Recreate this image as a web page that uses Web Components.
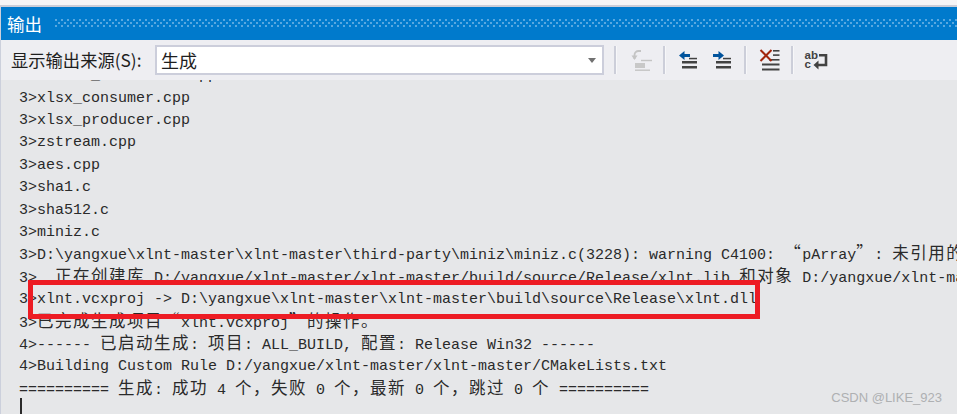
<!DOCTYPE html>
<html lang="zh-CN">
<head>
<meta charset="utf-8">
<title>输出</title>
<style>
html,body{margin:0;padding:0;height:414px;overflow:hidden;background:#e6e7e9}
</style>
</head>
<body>
<output-window>
  <title-bar slot="title">输出</title-bar>
  <output-toolbar slot="toolbar">
    <span slot="label">显示输出来源(S):</span>
    <source-combo slot="combo">生成</source-combo>
  </output-toolbar>
  <output-pane slot="pane">
    <output-line text="3>number_formatter.cpp"></output-line>
    <output-line text="3>xlsx_consumer.cpp"></output-line>
    <output-line text="3>xlsx_producer.cpp"></output-line>
    <output-line text="3>zstream.cpp"></output-line>
    <output-line text="3>aes.cpp"></output-line>
    <output-line text="3>sha1.c"></output-line>
    <output-line text="3>sha512.c"></output-line>
    <output-line text="3>miniz.c"></output-line>
    <output-line text="3>D:\yangxue\xlnt-master\xlnt-master\third-party\miniz\miniz.c(3228): warning C4100: “pArray”: 未引用的形参"></output-line>
    <output-line text="3>  正在创建库 D:/yangxue/xlnt-master/xlnt-master/build/source/Release/xlnt.lib 和对象 D:/yangxue/xlnt-master/xlnt-master/build/source/Release/xlnt.exp"></output-line>
    <output-line text="3>xlnt.vcxproj -> D:\yangxue\xlnt-master\xlnt-master\build\source\Release\xlnt.dll"></output-line>
    <output-line text="3>已完成生成项目“xlnt.vcxproj”的操作。"></output-line>
    <output-line text="4>------ 已启动生成: 项目: ALL_BUILD, 配置: Release Win32 ------"></output-line>
    <output-line text="4>Building Custom Rule D:/yangxue/xlnt-master/xlnt-master/CMakeLists.txt"></output-line>
    <output-line text="========== 生成: 成功 4 个，失败 0 个，最新 0 个，跳过 0 个 =========="></output-line>
    <text-caret></text-caret>
    <red-highlight slot="over"></red-highlight>
    <water-mark slot="over">CSDN @LIKE_923</water-mark>
  </output-pane>
</output-window>
<script>
function def(name, html, init){
  customElements.define(name, class extends HTMLElement{
    connectedCallback(){
      if(this.shadowRoot) return;
      const r=this.attachShadow({mode:'open'});
      r.innerHTML=html;
      if(init) init.call(this,r);
    }
  });
}
def('output-window',`<style>
:host{display:flex;flex-direction:column;width:957px;height:414px;overflow:hidden;background:#f5f5f6}
.top{height:5px;flex:none}
.line{height:2px;flex:none;background:#ccced8}
.body{flex:1;min-height:0;display:flex;flex-direction:column;border-left:1px solid #ccd0dc}
::slotted([slot=pane]){flex:1;min-height:0}
</style><div class="top"></div><div class="line"></div><div class="body"><slot name="title"></slot><slot name="toolbar"></slot><slot name="pane"></slot></div>`);

def('title-bar',`<style>
:host{display:flex;align-items:center;flex:none;height:33px;background:#007acc;color:#fff;padding-left:6px;font:17.5px/33px "Noto Sans CJK SC","Liberation Sans",sans-serif}
svg{display:block;flex:1;min-width:0;height:9px;margin-left:13px}
</style><slot></slot><svg aria-hidden="true"><defs><pattern id="g" width="6" height="6" patternUnits="userSpaceOnUse"><rect x="0" y="0" width="2" height="2" fill="#59a8e0"/><rect x="3" y="3" width="2" height="2" fill="#59a8e0"/></pattern></defs><rect width="100%" height="100%" fill="url(#g)"/></svg>`);

const ink='#424242', blue='#00539c';
def('output-toolbar',`<style>
:host{display:flex;align-items:center;flex:none;height:40px;background:#eeeef2;color:#1e1e1e;padding-left:10px;font:17.3px/24px "Noto Sans CJK SC","Liberation Sans",sans-serif;white-space:nowrap}
::slotted([slot=label]){width:144px;flex:none}
::slotted([slot=combo]){flex:none}
.sep{flex:none;height:28px;background:#ccced9;border-right:1px solid #f7f7f9;box-sizing:border-box;width:3px}
svg{flex:none;display:block;width:24px;height:24px;overflow:visible}
</style>
<slot name="label"></slot><slot name="combo"></slot>
<div class="sep" style="margin-left:10px"></div>
<svg style="margin:0 9px 0 13px" viewBox="0 0 24 24" aria-hidden="true">
  <path d="M11 3H8.500A4 4 0 0 0 4.500 7V11" fill="none" stroke="#c4c4c4" stroke-width="1.800"/>
  <path d="M1.500 7.500L4.500 12L7.500 7.500Z" fill="#c4c4c4"/>
  <rect x="11" y="11.800" width="11" height="1.400" fill="#c4c4c4"/>
  <rect x="5" y="15" width="10" height="5" fill="#c8c8c8"/>
  <rect x="5" y="21.500" width="15" height="1.400" fill="#c4c4c4"/>
</svg>
<div class="sep"></div>
<svg style="margin:0 0 0 10px" viewBox="0 0 24 24" aria-hidden="true">
  <path d="M3 7.500L8.500 3V6H14V9H8.500V12Z" fill="${blue}"/>
  <rect x="13" y="9.800" width="8" height="1.500" fill="${ink}"/>
  <rect x="6" y="13" width="15" height="2.500" fill="${ink}"/>
  <rect x="6" y="18" width="15" height="2.500" fill="${ink}"/>
</svg>
<svg style="margin:0 10px 0 10px" viewBox="0 0 24 24" aria-hidden="true">
  <path d="M14 7.500L8.500 3V6H3V9H8.500V12Z" fill="${blue}"/>
  <rect x="13" y="9.800" width="8" height="1.500" fill="${ink}"/>
  <rect x="6" y="13" width="15" height="2.500" fill="${ink}"/>
  <rect x="6" y="18" width="15" height="2.500" fill="${ink}"/>
</svg>
<div class="sep"></div>
<svg style="margin:0 9px 0 11px" viewBox="0 0 24 24" aria-hidden="true">
  <rect x="15" y="2" width="6.500" height="1.600" fill="${ink}"/>
  <rect x="15" y="6.300" width="6.500" height="1.600" fill="${ink}"/>
  <rect x="11" y="11" width="10.500" height="1.600" fill="${ink}"/>
  <rect x="4" y="15.500" width="17.500" height="2" fill="${ink}"/>
  <rect x="4" y="20.500" width="17.500" height="2" fill="${ink}"/>
  <path d="M2.500 2L13.500 13M13.500 2L2.500 13" stroke="#a1260d" stroke-width="2" fill="none"/>
</svg>
<div class="sep"></div>
<svg style="margin-left:10px" viewBox="0 0 24 24" aria-hidden="true">
  <text x="0.500" y="11" font-family="Liberation Sans" font-weight="700" font-size="11.500" fill="${ink}">ab</text>
  <text x="0.500" y="19.500" font-family="Liberation Sans" font-weight="700" font-size="11.500" fill="${ink}">c</text>
  <path d="M15 7.200H22V17H13" fill="none" stroke="${ink}" stroke-width="2.600"/>
  <path d="M9.500 17L14.500 12.500V21.500Z" fill="${ink}"/>
</svg>`);

def('source-combo',`<style>
:host{display:flex;align-items:center;box-sizing:border-box;width:449px;height:30px;background:#fff;border:2px solid #cccedb;padding:0 6px 0 4px;color:#1e1e1e;font:18px/24px "Noto Sans CJK SC","Liberation Sans",sans-serif}
.t{flex:1}
.a{flex:none;width:0;height:0;border:4px solid transparent;border-top:5px solid #717171;border-bottom:0}
</style><span class="t"><slot></slot></span><span class="a"></span>`);

def('output-pane',`<style>
:host{display:block;position:relative;overflow:hidden;background:#e6e7e9;color:#2a2a2a;font:15px/22.4px "Liberation Mono",monospace}
.list{margin-top:-14.8px;padding-left:18px}
</style><div class="list"><slot></slot></div><slot name="over"></slot>`);

def('output-line',`<style>
:host{display:block;height:22.4px;white-space:pre;overflow:visible}
.c{font-family:"Noto Sans CJK SC","Noto Sans CJK JP",sans-serif;font-size:16.500px;letter-spacing:1.500px;line-height:1}
</style><span id="t"></span>`,function(r){
  const t=r.getElementById('t');
  const s=this.getAttribute('text')||'';
  for(const part of s.split(/([\u3000-\u303f\u4e00-\u9fff\uff00-\uff60“”]+)/)){
    if(!part) continue;
    if(/^[\u3000-\u303f\u4e00-\u9fff\uff00-\uff60“”]/.test(part)){
      const e=document.createElement('span');e.className='c';e.lang='zh-CN';e.textContent=part;t.appendChild(e);
    }else t.appendChild(document.createTextNode(part));
  }
});

def('text-caret',`<style>
:host{display:block;width:2px;height:16px;margin:-3px 0 0 1px;background:#2a2a2a}
</style>`);

def('red-highlight',`<style>
:host{display:block;position:absolute;left:27px;top:200px;width:732px;height:39px;box-sizing:border-box;border:5.500px solid #ed1c24}
</style>`);

def('water-mark',`<style>
:host{position:absolute;right:15px;bottom:8px;color:#aeb0b2;font:13px/16px "Liberation Sans",sans-serif;white-space:nowrap}
</style><slot></slot>`);
</script>
</body>
</html>
